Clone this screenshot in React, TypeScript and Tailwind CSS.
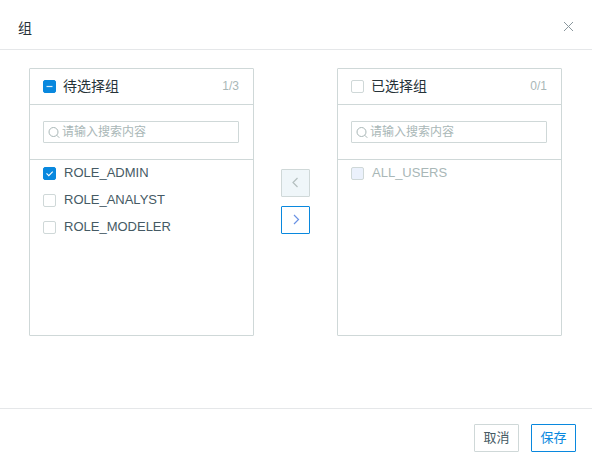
import { useEffect, useRef, useState } from "react";

type Item = { name: string; disabled?: boolean };

type CheckProps = {
  id: string;
  checked: boolean;
  indeterminate?: boolean;
  disabled?: boolean;
  onChange: () => void;
};

function Check({ id, checked, indeterminate = false, disabled = false, onChange }: CheckProps) {
  const ref = useRef<HTMLInputElement>(null);
  useEffect(() => {
    if (ref.current) ref.current.indeterminate = indeterminate;
  }, [indeterminate]);
  return (
    <span className="relative flex size-[13px] shrink-0">
      <input
        ref={ref}
        id={id}
        type="checkbox"
        checked={checked}
        disabled={disabled}
        onChange={onChange}
        className="size-[13px] appearance-none rounded-xs border border-[#cfd8d8] bg-white checked:border-[#0988de] checked:bg-[#0988de] indeterminate:border-[#0988de] indeterminate:bg-[#0988de] disabled:bg-[#ebf1fc]"
      />
      {(checked || indeterminate) && (
        <svg viewBox="0 0 13 13" className="pointer-events-none absolute inset-0 size-[13px]" fill="none" stroke="#ffffff">
          {indeterminate ? (
            <path d="M3.5 6.500h6" strokeWidth="1.2" opacity="0.85" />
          ) : (
            <path d="M3.5 6.3l2.3 2.3 3.9-4" strokeWidth="1.1" />
          )}
        </svg>
      )}
    </span>
  );
}

function Panel({ id, title, items, initial }: { id: string; title: string; items: Item[]; initial: string[] }) {
  const [selected, setSelected] = useState<string[]>(initial);
  const [query, setQuery] = useState("");
  const enabled = items.filter((i) => !i.disabled);
  const all = enabled.length > 0 && selected.length === enabled.length;
  const some = selected.length > 0 && !all;
  const toggle = (name: string) =>
    setSelected((s) => (s.includes(name) ? s.filter((n) => n !== name) : [...s, name]));

  return (
    <section className="flex min-h-[268px] flex-col rounded-[1px] border border-[#cfd8d8]">
      <header className="flex h-9 items-center border-b border-[#cfd8d8] pr-[14px] pl-[13px]">
        <Check
          id={`${id}-all`}
          checked={all}
          indeterminate={some}
          onChange={() => setSelected(all ? [] : enabled.map((i) => i.name))}
        />
        <label htmlFor={`${id}-all`} className="pb-0.5 pl-[7px] text-sm leading-5 text-[#263238]">
          {title}
        </label>
        <span className="ml-auto pb-0.5 text-xs leading-5 text-[#a9b7b7]">
          {selected.length}/{items.length}
        </span>
      </header>
      <div className="border-b border-[#cfd8d8] py-4 pr-[14px] pl-[13px]">
        <label className="flex h-[22px] items-center gap-px rounded-[1px] border border-[#cfd8d8] px-1">
          <svg viewBox="0 0 13 13" className="size-[13px] shrink-0" fill="none" stroke="#a9b7b7">
            <circle cx="5.500" cy="6" r="4.500" />
            <path d="M8.700 9.200l2.600 2.600" />
          </svg>
          <input
            type="text"
            aria-label={`${title} 搜索`}
            value={query}
            onChange={(e) => setQuery(e.target.value)}
            placeholder="请输入搜索内容"
            className="w-full min-w-0 bg-transparent text-xs leading-5 text-[#455a64] outline-none placeholder:text-[#a9b7b7]"
          />
        </label>
      </div>
      <ul>
        {items
          .filter((i) => i.name.toLowerCase().includes(query.toLowerCase()))
          .map((i) => (
            <li key={i.name} className="flex h-[27px] items-center px-[13px]">
              <Check
                id={`${id}-${i.name}`}
                checked={selected.includes(i.name)}
                disabled={i.disabled}
                onChange={() => toggle(i.name)}
              />
              <label
                htmlFor={`${id}-${i.name}`}
                className={`pb-0.5 pl-2 text-[13px] leading-5 ${i.disabled ? "text-[#a9b7b7]" : "text-[#455a64]"}`}
              >
                {i.name}
              </label>
            </li>
          ))}
      </ul>
    </section>
  );
}

export default function App() {
  return (
    <div
      role="dialog"
      aria-labelledby="dialog-title"
      className="flex min-h-screen flex-col bg-white font-['Liberation_Sans','Noto_Sans_CJK_SC',sans-serif]"
    >
      <header className="flex h-[50px] items-center justify-between border-b border-[#e5e7e9] px-[18px] pt-1">
        <h1 id="dialog-title" className="pt-0.5 text-sm leading-5 text-[#263238]">
          组
        </h1>
        <button type="button" aria-label="关闭">
          <svg viewBox="0 0 11 11" className="size-[11px]" fill="none" stroke="#8a979d">
            <path d="M1 1l9 9M10 1l-9 9" />
          </svg>
        </button>
      </header>
      <main className="grid flex-1 grid-cols-[1fr_auto_1fr] content-start pt-[18px] pr-[30px] pl-[29px]">
        <Panel
          id="source"
          title="待选择组"
          items={[{ name: "ROLE_ADMIN" }, { name: "ROLE_ANALYST" }, { name: "ROLE_MODELER" }]}
          initial={["ROLE_ADMIN"]}
        />
        <div className="flex flex-col gap-[9px] self-center px-[27px] pb-px">
          <button
            type="button"
            disabled
            aria-label="移回"
            className="flex h-7 w-[29px] items-center justify-center rounded-[1px] border border-[#cfd8d8] bg-[#eff6f9]"
          >
            <svg viewBox="0 0 12 12" className="size-3" fill="none" stroke="#b4bfbf" strokeWidth="1.2">
              <path d="M7.500 1L3 5.500 7.500 10" />
            </svg>
          </button>
          <button
            type="button"
            aria-label="移入"
            className="flex h-7 w-[29px] items-center justify-center rounded-[1px] border border-[#0988de]"
          >
            <svg viewBox="0 0 12 12" className="size-3" fill="none" stroke="#6a92e4" strokeWidth="1.2">
              <path d="M4 1l4.500 4.500L4 10" />
            </svg>
          </button>
        </div>
        <Panel id="target" title="已选择组" items={[{ name: "ALL_USERS", disabled: true }]} initial={[]} />
      </main>
      <footer className="flex justify-end gap-3 border-t border-[#e5e7e9] px-4 pt-[15px] pb-3">
        <button
          type="button"
          className="h-7 w-[45px] rounded-[1px] border border-[#cfd8d8] text-[13px] leading-5 text-[#455a64]"
        >
          取消
        </button>
        <button
          type="button"
          className="h-7 w-[45px] rounded-[1px] border border-[#0988de] text-[13px] leading-5 text-[#0988de]"
        >
          保存
        </button>
      </footer>
    </div>
  );
}
